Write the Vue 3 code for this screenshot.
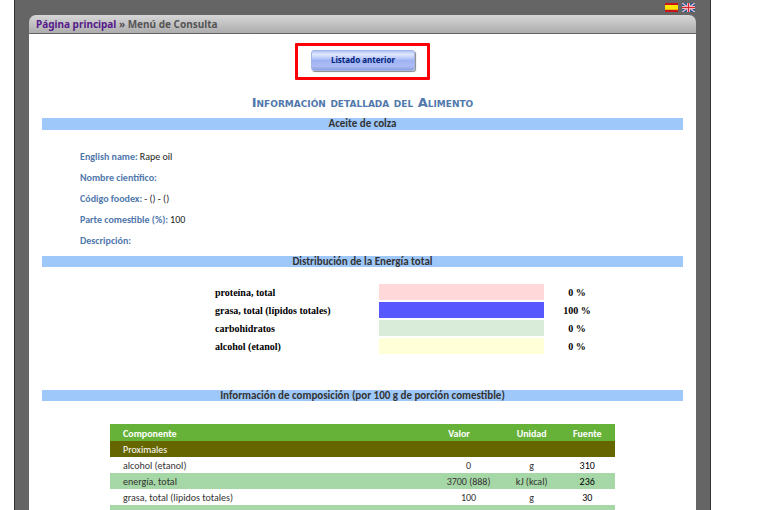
<script setup>
const details = [
  { label: 'English name:', value: 'Rape oil' },
  { label: 'Nombre científico:', value: '' },
  { label: 'Código foodex:', value: '- () - ()' },
  { label: 'Parte comestible (%):', value: '100' },
  { label: 'Descripción:', value: '' },
]
const energy = [
  { name: 'proteína, total', value: 0, tone: 'protein' },
  { name: 'grasa, total (lípidos totales)', value: 100, tone: 'fat' },
  { name: 'carbohidratos', value: 0, tone: 'carbs' },
  { name: 'alcohol (etanol)', value: 0, tone: 'alcohol' },
]
const components = [
  { name: 'alcohol (etanol)', value: '0', unit: 'g', source: '310' },
  { name: 'energía, total', value: '3700 (888)', unit: 'kJ (kcal)', source: '236' },
  { name: 'grasa, total (lipidos totales)', value: '100', unit: 'g', source: '30' },
  { name: '', value: '', unit: '', source: '' },
]
</script>

<template>
  <div class="page">
    <nav class="languages">
      <a href="#es">
        <svg width="13" height="9" viewBox="0 0 13 9" aria-hidden="true">
          <rect width="13" height="9" fill="#c8141c" />
          <rect y="2" width="13" height="5" fill="#ffe600" />
          <rect y="6" width="13" height="1" fill="#f6b300" />
        </svg>
      </a>
      <a href="#en">
        <svg width="13" height="9" viewBox="0 0 13 9" aria-hidden="true">
          <rect width="13" height="9" fill="#1d5f9c" />
          <path d="M0 0L13 9M13 0L0 9" stroke="#e8b8c0" stroke-width="1.4" />
          <path d="M6.5 0V9M0 4.5H13" stroke="#f0b4b8" stroke-width="3" />
          <path d="M6.5 0V9M0 4.5H13" stroke="#dc2430" stroke-width="1" />
        </svg>
      </a>
    </nav>
    <header class="crumbs"><a href="#inicio">Página principal</a> » Menú de Consulta</header>
    <main class="content">
      <div class="highlight"><button type="button">Listado anterior</button></div>
      <h1>Información detallada del Alimento</h1>
      <h2 class="food">Aceite de colza</h2>
      <dl class="details">
        <div v-for="d in details" :key="d.label">
          <dt>{{ d.label }}</dt>
          <dd>{{ d.value }}</dd>
        </div>
      </dl>
      <h2>Distribución de la Energía total</h2>
      <div class="energy">
        <div v-for="e in energy" :key="e.name" class="energy-row">
          <span>{{ e.name }}</span>
          <span class="bar" :class="e.tone"></span>
          <span class="percent">{{ e.value }} %</span>
        </div>
      </div>
      <h2>Información de composición (por 100 g de porción comestible)</h2>
      <table>
        <colgroup>
          <col class="col-name" />
          <col class="col-value" />
          <col class="col-unit" />
          <col class="col-source" />
        </colgroup>
        <thead>
          <tr>
            <th>Componente</th>
            <th class="value-head">Valor</th>
            <th>Unidad</th>
            <th>Fuente</th>
          </tr>
        </thead>
        <tbody>
          <tr class="group"><td colspan="4">Proximales</td></tr>
          <tr v-for="(c, i) in components" :key="i">
            <td>{{ c.name }}</td>
            <td>{{ c.value }}</td>
            <td>{{ c.unit }}</td>
            <td class="source">{{ c.source }}</td>
          </tr>
        </tbody>
      </table>
    </main>
  </div>
</template>

<style>
body {
  margin: 0;
  background: #fff;
}
</style>

<style scoped>
* {
  box-sizing: border-box;
}
.page {
  height: 100vh;
  overflow: hidden;
  display: flex;
  flex-direction: column;
  margin: 0 50px 0 14px;
  padding: 0 14px;
  border: solid #333;
  border-width: 0 1px;
  background: #656565;
  font-family: Carlito, Lato, "Open Sans", sans-serif;
}
.languages {
  display: flex;
  flex: none;
  justify-content: flex-end;
  gap: 4px;
  height: 15px;
  padding: 3px 1px 0 0;
}
.languages svg {
  display: block;
}
.crumbs {
  flex: none;
  height: 19px;
  padding: 0 7px;
  border-bottom: 1px solid #656565;
  border-radius: 7px 7px 0 0;
  background: linear-gradient(#d6d6d6, #adadad);
  color: #555;
  font: bold 10px/18px "Noto Sans", sans-serif;
}
.crumbs a {
  color: #551a8b;
  text-decoration: none;
}
.content {
  flex: 1;
  padding: 9px 13px 0;
  background: #fff;
}
.highlight {
  width: 135px;
  height: 37px;
  margin: 0 auto;
  padding: 4px 13px;
  border: 3px solid #fb0007;
  border-radius: 1px;
}
button {
  display: block;
  width: 104px;
  height: 21px;
  padding: 0 0 2px;
  border: 1px solid #a3b5e8;
  border-radius: 3px;
  background: linear-gradient(#b4c3f5 0, #dfe7ff 18%, #bccafa 38%, #9fb2f3 50%, #adbcf5 80%, #8ba0dc);
  box-shadow: 1px 1px 1px #888;
  color: #00237c;
  font: bold 8px/16px "Noto Sans", sans-serif;
}
h1 {
  margin: 14px 0 0;
  color: #5078ac;
  font: small-caps bold 13px/17px "DejaVu Sans", sans-serif;
  text-align: center;
}
h2 {
  height: 11px;
  margin: 0;
  background: #9fc8fa;
  color: #333;
  font-size: 11px;
  font-weight: bold;
  line-height: 12px;
  text-align: center;
}
h2.food {
  height: 12px;
  margin-top: 7px;
}
.details {
  margin: 0;
  padding: 16px 38px 5px;
  color: #222;
  font-size: 10px;
  line-height: 21px;
}
.details div {
  display: flex;
  gap: 2px;
}
dt {
  color: #5078ac;
  font-weight: bold;
}
dd {
  margin: 0;
}
.energy {
  display: grid;
  gap: 2px;
  padding: 17px 73px 36px 173px;
  color: #000;
  font: bold 10px/18px "Liberation Serif", serif;
}
.energy-row {
  display: grid;
  grid-template-columns: 164fr 165fr 66fr;
  height: 16px;
}
.bar {
  height: 16px;
}
.percent {
  text-align: center;
}
.protein {
  background: #ffd8d9;
}
.fat {
  background: #5858ff;
}
.carbs {
  background: #d9ecd9;
}
.alcohol {
  background: #ffffd8;
}
table {
  width: calc(100% - 136px);
  margin: 23px 68px 0;
  border-collapse: collapse;
  table-layout: fixed;
  color: #333;
  font-size: 10px;
  line-height: 14px;
}
.col-name {
  width: 64%;
}
.col-value {
  width: 14%;
}
.col-unit {
  width: 11%;
}
.col-source {
  width: 11%;
}
th,
td {
  height: 16px;
  padding: 2px 0 0;
  text-align: center;
  white-space: nowrap;
}
th:first-child,
td:first-child {
  padding-left: 13px;
  text-align: left;
}
th {
  height: 17px;
  background: #66b239;
  color: #fff;
}
th.value-head {
  padding-left: 15px;
  text-align: left;
}
.group {
  background: #666600;
  color: #fff;
}
tbody tr:nth-child(odd):not(.group) {
  background: #a6d7a6;
}
.source {
  color: #000;
}
</style>
